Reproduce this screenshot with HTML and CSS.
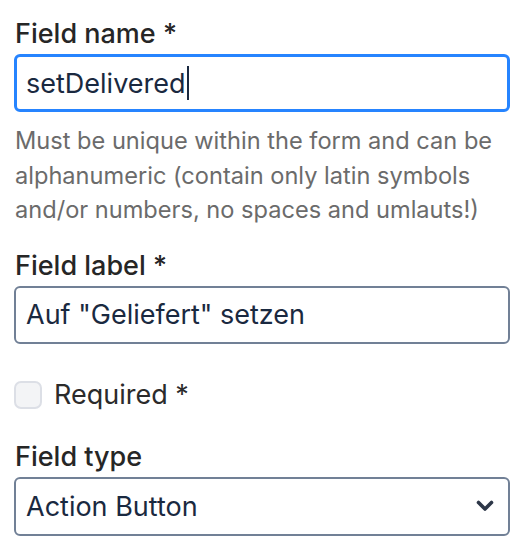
FILE: index.html
```html
<!DOCTYPE html>
<html>
<head>
<meta charset="utf-8">
<link rel="stylesheet" href="styles.css">
</head>
<body>
<form class="form">
  <div class="group">
    <label class="label" for="name">Field name *</label>
    <div class="input focused" id="name"><span>setDelivered</span><span class="caret"></span></div>
    <p class="help">Must be unique within the form and can be alphanumeric (contain only latin symbols and/or numbers, no spaces and umlauts!)</p>
  </div>
  <div class="group">
    <label class="label" for="flabel">Field label *</label>
    <div class="input" id="flabel">Auf "Geliefert" setzen</div>
  </div>
  <div class="check-row">
    <span class="checkbox"></span>
    <span class="check-label">Required *</span>
  </div>
  <div class="group">
    <label class="label">Field type</label>
    <div class="input select">
      <span>Action Button</span>
      <svg class="chevron" width="18" height="12" viewBox="0 0 18 12"><path d="M2.5 2.5 L9 9 L15.5 2.5" fill="none" stroke="#2d3748" stroke-width="3.6" stroke-linecap="round" stroke-linejoin="round"/></svg>
    </div>
  </div>
</form>
</body>
</html>
```

FILE: styles.css
```css
html, body {
  margin: 0;
  padding: 0;
  background: #fff;
}
body {
  font-family: Inter, "Noto Sans", sans-serif;
  width: 526px;
  height: 554px;
  overflow: hidden;
}
.form {
  padding: 14px 16px 0 14px;
}
.group {
  display: flex;
  flex-direction: column;
}
.label {
  font-size: 27px;
  font-weight: 500;
  color: #262626;
  line-height: 40px;
  padding-left: 1px;
}
.input {
  box-sizing: border-box;
  height: 58px;
  border: 2px solid #718096;
  border-radius: 6px;
  display: flex;
  align-items: center;
  padding: 0 10px;
  font-size: 27px;
  color: #1a2940;
}
.input.focused {
  border: 3px solid #2684ff;
  padding-left: 9px;
}
.caret {
  width: 2px;
  height: 34px;
  background: #1a2940;
  margin-left: 1px;
}
.help {
  margin: 12px 0 0 1px;
  font-size: 23.6px;
  line-height: 34.5px;
  color: #6b6b6b;
}
.group + .group {
  margin-top: 18px;
}
.check-row {
  display: flex;
  align-items: center;
  margin: 37px 0 0 0;
  height: 28px;
}
.checkbox {
  box-sizing: border-box;
  width: 28px;
  height: 28px;
  border: 2px solid #dcdfe6;
  background: #f3f4f6;
  border-radius: 7px;
}
.check-label {
  font-size: 27px;
  color: #2b2b2b;
  margin-left: 12px;
}
.check-row + .group {
  margin-top: 28px;
}
.select {
  height: 59px;
  justify-content: space-between;
  padding-right: 14px;
}
.chevron {
  display: block;
}
```
